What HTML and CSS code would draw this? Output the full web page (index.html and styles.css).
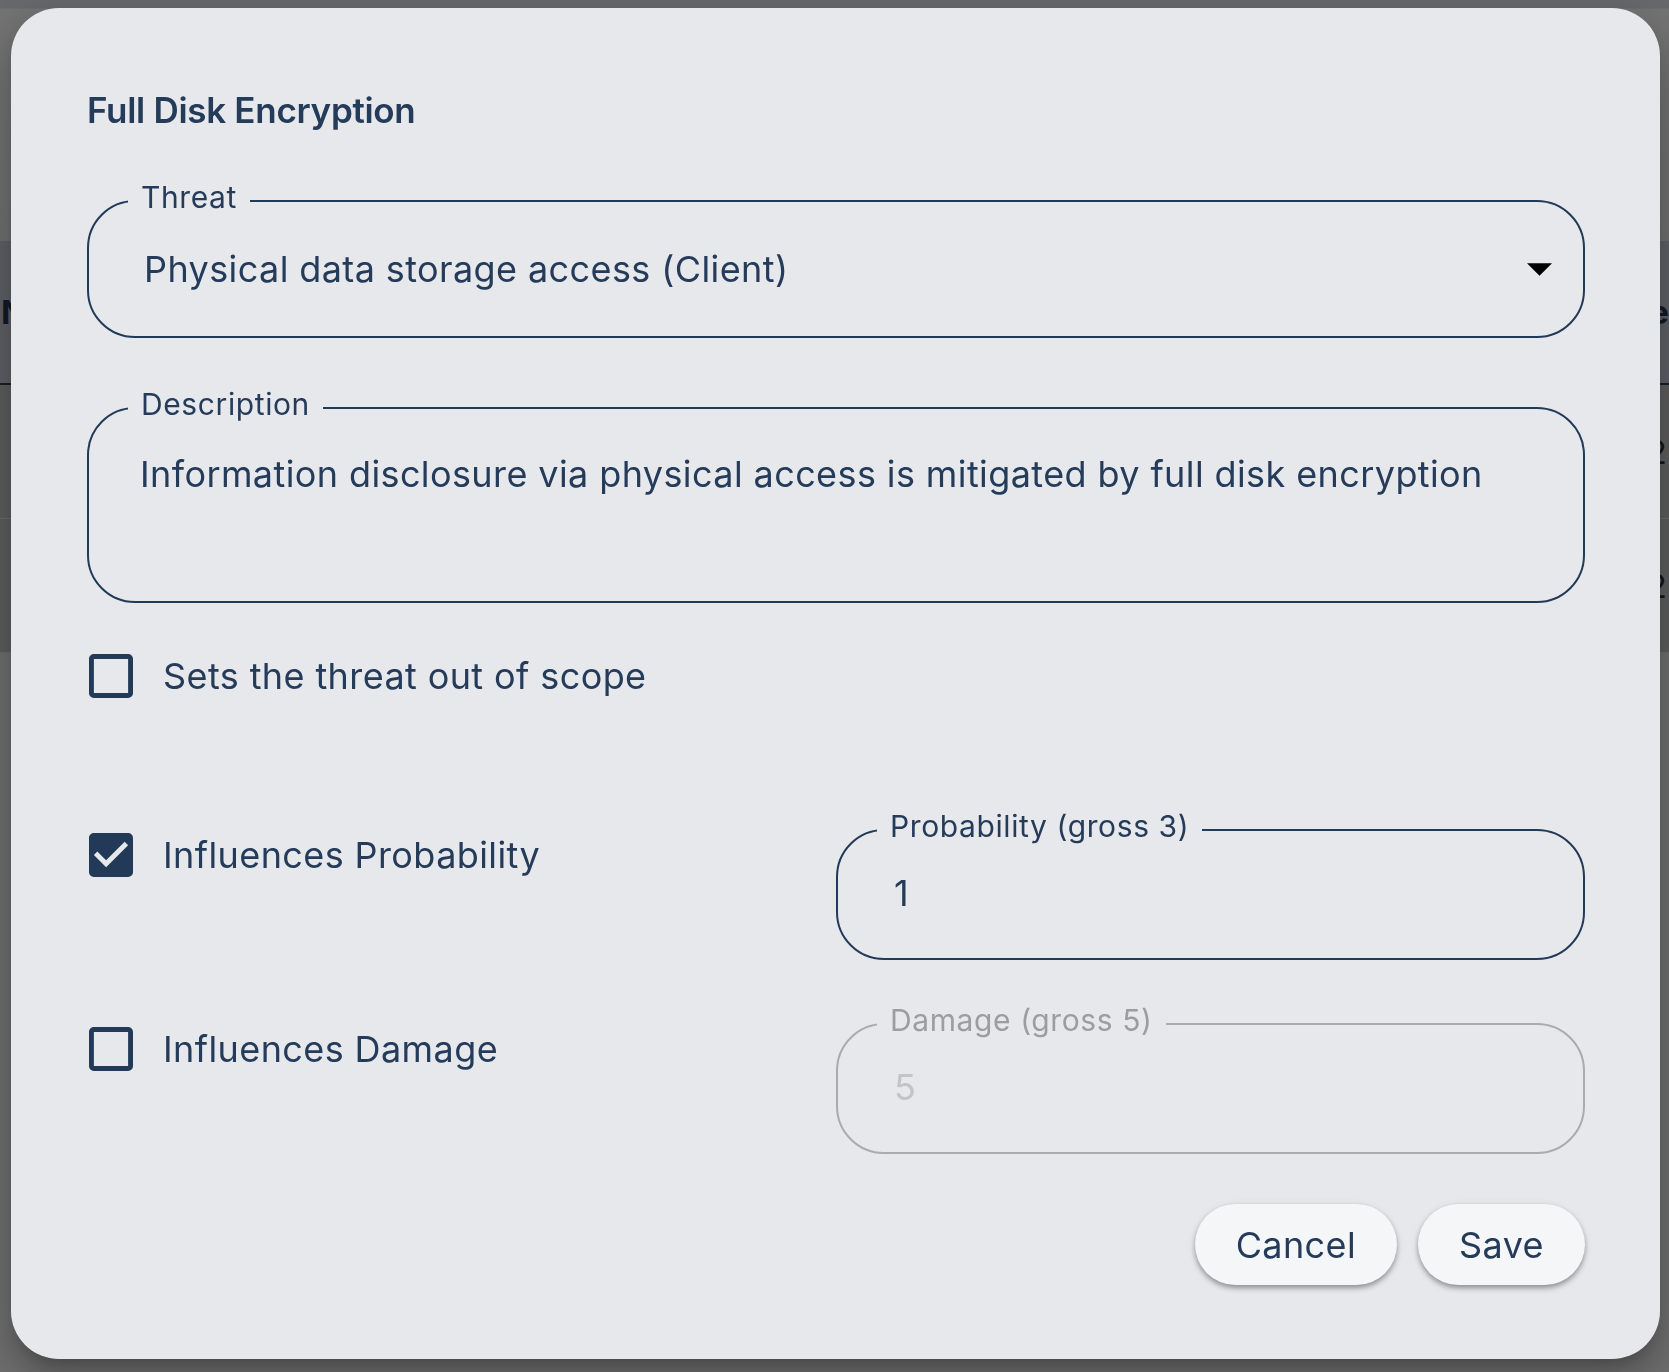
FILE: index.html
```html
<!DOCTYPE html>
<html lang="en">
<head>
<meta charset="utf-8">
<title>Full Disk Encryption</title>
<link rel="stylesheet" href="styles.css">
</head>
<body>
<div class="page">
  <div class="page-top"></div>
  <div class="thead"><span>Name</span><span>Type</span></div>
  <div class="trow"><span>Server</span><span>2</span></div>
  <div class="trow"><span>Client</span><span>2</span></div>
</div>

<div class="dialog" role="dialog" aria-labelledby="dlg-title">
  <h2 id="dlg-title" class="dialog-title">Full Disk Encryption</h2>

  <fieldset class="field field-threat">
    <legend class="field-label">Threat</legend>
    <div class="select-value">
      <span>Physical data storage access (Client)</span>
      <svg class="select-arrow" width="25" height="13" viewBox="7 10 10 5" aria-hidden="true"><path d="M7 10l5 5 5-5z" fill="#000"/></svg>
    </div>
  </fieldset>

  <fieldset class="field field-desc">
    <legend class="field-label">Description</legend>
    <div class="desc-value">Information disclosure via physical access is mitigated by full disk encryption</div>
  </fieldset>

  <label class="check-row check-scope">
    <svg class="checkbox" width="44" height="44" viewBox="3 3 18 18" aria-hidden="true"><path d="M19 5v14H5V5h14m0-2H5c-1.1 0-2 .9-2 2v14c0 1.1.9 2 2 2h14c1.1 0 2-.9 2-2V5c0-1.1-.9-2-2-2z"/></svg>
    <span>Sets the threat out of scope</span>
  </label>

  <div class="influence-grid">
    <div class="grid-left">
      <label class="check-row">
        <svg class="checkbox" width="44" height="44" viewBox="3 3 18 18" aria-hidden="true"><path d="M19 3H5c-1.11 0-2 .9-2 2v14c0 1.1.89 2 2 2h14c1.11 0 2-.9 2-2V5c0-1.1-.89-2-2-2zm-9 14l-5-5 1.41-1.41L10 14.17l7.590-7.59L19 8l-9 9z"/></svg>
        <span>Influences Probability</span>
      </label>
    </div>
    <fieldset class="field field-num">
      <legend class="field-label">Probability (gross 3)</legend>
      <div class="num-value">1</div>
    </fieldset>

    <div class="grid-left">
      <label class="check-row">
        <svg class="checkbox" width="44" height="44" viewBox="3 3 18 18" aria-hidden="true"><path d="M19 5v14H5V5h14m0-2H5c-1.1 0-2 .9-2 2v14c0 1.1.9 2 2 2h14c1.1 0 2-.9 2-2V5c0-1.1-.9-2-2-2z"/></svg>
        <span>Influences Damage</span>
      </label>
    </div>
    <fieldset class="field field-num field-disabled" disabled>
      <legend class="field-label">Damage (gross 5)</legend>
      <div class="num-value">5</div>
    </fieldset>
  </div>

  <div class="dialog-actions">
    <button class="btn" type="button">Cancel</button>
    <button class="btn" type="button">Save</button>
  </div>
</div>
</body>
</html>
```
FILE: styles.css
```css
html, body {
  margin: 0;
  padding: 0;
}

body {
  width: 1669px;
  height: 1372px;
  overflow: hidden;
  background: #6b6b6b;
  font-family: Inter, "Noto Sans", sans-serif;
}

/* dimmed application page behind the dialog */
.page {
  display: flex;
  flex-direction: column;
  height: 1372px;
  background: linear-gradient(180deg, #68696c 0, #68696c 8px, #747474 9px, #6f6f6f 241px);
}

.page-top {
  height: 241px;
  flex: none;
}

.thead {
  height: 144px;
  flex: none;
  box-sizing: border-box;
  background: #5e6067;
  border-bottom: 2px solid #16202c;
  display: flex;
  justify-content: space-between;
  align-items: center;
  padding: 0 0 0 1px;
  font-weight: 700;
  font-size: 33px;
  color: #111a26;
}

.trow {
  height: 134px;
  flex: none;
  box-sizing: border-box;
  background: #5d5d5d;
  border-bottom: 1px solid #6c6c6c;
  display: flex;
  justify-content: space-between;
  align-items: center;
  padding: 0 2px 0 12px;
  font-size: 33px;
  color: #161616;
}

/* dialog */
.dialog {
  position: fixed;
  left: 11px;
  top: 8px;
  width: 1649px;
  height: 1351px;
  box-sizing: border-box;
  padding: 81px 75px 0 76px;
  background: #e7e8ec;
  border-radius: 48px;
  box-shadow: 0 11px 15px -7px rgba(0,0,0,.2), 0 24px 38px 3px rgba(0,0,0,.14), 0 9px 46px 8px rgba(0,0,0,.12);
  color: #243b5a;
  font-size: 36px;
  letter-spacing: 0.4px;
}

.dialog-title {
  margin: 0 0 48px;
  font-size: 35px;
  line-height: 42px;
  font-weight: 600;
  letter-spacing: -0.3px;
}

/* outlined fields */
.field {
  margin: 0;
  padding: 0;
  min-width: 0;
  box-sizing: border-box;
  border: 2px solid #223a58;
  border-radius: 48px;
  line-height: 44px;
}

.field-label {
  margin-left: 39px;
  padding: 0 13px 8px;
  font-size: 30px;
  line-height: 36px;
  letter-spacing: 0.6px;
}

.field-threat {
  height: 159px;
  padding-top: 24px;
}

.select-value {
  display: flex;
  justify-content: space-between;
  align-items: center;
  padding: 0 31px 0 55px;
}

.select-arrow {
  display: block;
  flex: none;
}

.field-desc {
  margin-top: 48px;
  height: 217px;
  padding-top: 22px;
}

.desc-value {
  white-space: nowrap;
  padding-left: 51px;
}

/* checkboxes */
.check-row {
  display: flex;
  align-items: center;
  gap: 30px;
  height: 45px;
  padding-left: 2px;
  line-height: 44px;
}

.checkbox {
  display: block;
  flex: none;
  fill: #223a58;
}

.check-scope {
  margin-top: 50px;
}

.influence-grid {
  margin-top: 110px;
  display: grid;
  grid-template-columns: 749px 749px;
  row-gap: 42px;
  align-items: start;
}

.grid-left {
  padding-top: 24px;
}

.field-num {
  height: 152px;
  padding-top: 19px;
}

.num-value {
  padding-left: 56px;
}

.field-disabled {
  border-color: #aaabaf;
  color: #9c9da1;
}

.field-disabled .num-value {
  color: #c3c4c8;
}

/* actions */
.dialog-actions {
  margin-top: 50px;
  display: flex;
  justify-content: flex-end;
  gap: 21px;
}

.btn {
  height: 81px;
  padding: 0 41px;
  border: none;
  border-radius: 41px;
  background: #f5f6f8;
  color: #243b5a;
  font-family: Inter, "Noto Sans", sans-serif;
  font-size: 36px;
  letter-spacing: 0.4px;
  box-shadow: 0 4px 6px -1px rgba(0,0,0,.28), 0 2px 4px rgba(0,0,0,.12), 0 1px 8px rgba(0,0,0,.08);
  cursor: pointer;
}
```
